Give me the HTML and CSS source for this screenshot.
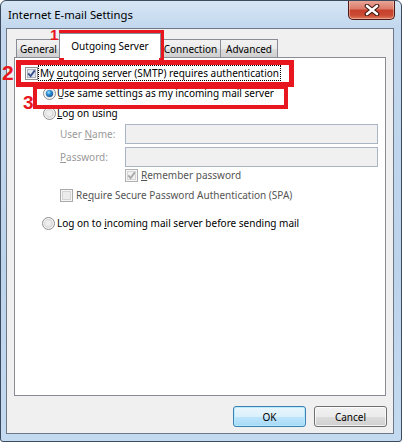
FILE: index.html
```html
<!DOCTYPE html>
<html>
<head>
<meta charset="utf-8">
<link rel="stylesheet" href="styles.css">
</head>
<body>
<div class="window">
  <div class="titlebar">
    <span class="title">Internet E-mail Settings</span>
    <div class="close">
      <svg width="16" height="12" viewBox="0 0 16 12">
        <path d="M3 2 L13 10 M13 2 L3 10" stroke="#3a1410" stroke-width="4.6" stroke-linecap="round"/>
        <path d="M3 2 L13 10 M13 2 L3 10" stroke="#ffffff" stroke-width="2.6" stroke-linecap="round"/>
      </svg>
    </div>
  </div>
  <div class="client">
    <div class="tabs">
      <div class="tab t-general">General</div>
      <div class="tab selected t-outgoing">Outgoing Server</div>
      <div class="tab t-connection">Connection</div>
      <div class="tab t-advanced">Advanced</div>
    </div>
    <div class="panel">
      <div class="row row-auth">
        <svg class="box" width="13" height="13" viewBox="0 0 13 13">
          <rect x="0.5" y="0.5" width="12" height="12" fill="#f6f6f6" stroke="#8e8f8f"/>
          <rect x="2.5" y="2.5" width="8" height="8" fill="#dfe6ee" stroke="#aeb4bd"/>
          <path d="M3.2 6.4 L5.6 9 L9.8 3.4" fill="none" stroke="#3a4f8e" stroke-width="1.8"/>
        </svg>
        <span class="label focus">My <u>o</u>utgoing server (SMTP) requires authentication</span>
      </div>
      <div class="row row-radio1">
        <svg class="box" width="13" height="13" viewBox="0 0 13 13">
          <defs>
            <radialGradient id="dot" cx="0.4" cy="0.35" r="0.7">
              <stop offset="0" stop-color="#9be3ff"/>
              <stop offset="0.45" stop-color="#2a8fd6"/>
              <stop offset="1" stop-color="#174f8c"/>
            </radialGradient>
          </defs>
          <circle cx="6.5" cy="6.5" r="6" fill="#f4f4f4" stroke="#8f8f8f"/>
          <circle cx="6.5" cy="6.5" r="4.2" fill="#dadada"/>
          <circle cx="6.5" cy="6.5" r="3.6" fill="url(#dot)"/>
        </svg>
        <span class="label">U̲se same settings as my incoming mail server</span>
      </div>
      <div class="row row-radio2">
        <svg class="box" width="13" height="13" viewBox="0 0 13 13">
          <circle cx="6.5" cy="6.5" r="6" fill="#f4f4f4" stroke="#8f8f8f"/>
          <circle cx="6.5" cy="6.5" r="4.4" fill="#d9d9d9"/>
          <circle cx="6.2" cy="6.2" r="3" fill="#eeeeee"/>
        </svg>
        <span class="label"><u>L</u>og on using</span>
      </div>
      <div class="row row-field row-user">
        <span class="flabel">User <u>N</u>ame:</span>
        <span class="input"></span>
      </div>
      <div class="row row-field row-pass">
        <span class="flabel"><u>P</u>assword:</span>
        <span class="input"></span>
      </div>
      <div class="row row-remember">
        <svg class="box" width="13" height="13" viewBox="0 0 13 13">
          <rect x="0.5" y="0.5" width="12" height="12" fill="#f6f6f6" stroke="#b1b1b1"/>
          <rect x="2.5" y="2.5" width="8" height="8" fill="#f1f1f1" stroke="#d6d6d6"/>
          <path d="M3.2 6.4 L5.6 9 L9.8 3.4" fill="none" stroke="#a8a8a8" stroke-width="1.8"/>
        </svg>
        <span class="label dim"><u>R</u>emember password</span>
      </div>
      <div class="row row-spa">
        <svg class="box" width="13" height="13" viewBox="0 0 13 13">
          <rect x="0.5" y="0.5" width="12" height="12" fill="#f6f6f6" stroke="#a9a9a9"/>
          <rect x="2.5" y="2.5" width="8" height="8" fill="#ececec" stroke="#d4d4d4"/>
        </svg>
        <span class="label dim">Re<u>q</u>uire Secure Password Authentication (SPA)</span>
      </div>
      <div class="row row-radio3">
        <svg class="box" width="13" height="13" viewBox="0 0 13 13">
          <circle cx="6.5" cy="6.5" r="6" fill="#f4f4f4" stroke="#8f8f8f"/>
          <circle cx="6.5" cy="6.5" r="4.4" fill="#d9d9d9"/>
          <circle cx="6.2" cy="6.2" r="3" fill="#eeeeee"/>
        </svg>
        <span class="label">Log on to <u>i</u>ncoming mail server before sending mail</span>
      </div>
    </div>
    <div class="buttons">
      <button class="btn default">OK</button>
      <button class="btn">Cancel</button>
    </div>
  </div>
  <div class="mark box1"></div>
  <div class="mark box2"></div>
  <div class="mark box3"></div>
  <span class="num n1">1</span>
  <span class="num n2">2</span>
  <span class="num n3">3</span>
</div>
</body>
</html>
```
FILE: styles.css
```css
html, body {
  margin: 0;
  padding: 0;
  background: #ffffff;
}

.window {
  position: relative;
  width: 402px;
  height: 442px;
  box-sizing: border-box;
  border: 1px solid #3b4a5c;
  border-radius: 6px 6px 3px 3px;
  background: linear-gradient(180deg, #d6e5f5 0px, #c3d8ee 26px, #bcd3ec 60%, #c4daf0 100%);
  display: flex;
  flex-direction: column;
  font-family: "Noto Sans", "Open Sans", sans-serif;
  font-size: 10px;
  color: #000;
  overflow: hidden;
}

.titlebar {
  height: 27px;
  flex: none;
  display: flex;
  align-items: flex-start;
}

.title {
  margin: 7px 0 0 7px;
  line-height: 14px;
  font-size: 11.3px;
  color: #000;
}

.close {
  margin-left: auto;
  margin-right: 6px;
  margin-top: -1px;
  width: 47px;
  height: 20px;
  box-sizing: border-box;
  border: 1px solid #4b1a14;
  border-top: none;
  border-radius: 0 0 5px 5px;
  background: linear-gradient(180deg, #e9aa9c 0%, #dc7c6a 45%, #c8412c 55%, #c94a33 80%, #e07a5c 100%);
  box-shadow: inset 0 0 0 1px rgba(255, 220, 210, 0.45);
  display: flex;
  align-items: center;
  justify-content: center;
}

.client {
  flex: 1;
  margin: 0 7px 7px 5px;
  border: 1px solid #6c7887;
  background: #f0f0f0;
  display: flex;
  flex-direction: column;
}

.tabs {
  height: 28px;
  flex: none;
  display: flex;
  align-items: flex-end;
  padding-left: 9px;
}

.tab {
  box-sizing: border-box;
  height: 18px;
  padding-top: 2px;
  line-height: 14px;
  text-align: center;
  border: 1px solid #898c95;
  border-bottom: none;
  background: linear-gradient(180deg, #f2f2f2 0%, #ebebeb 50%, #dddddd 50%, #cfcfcf 100%);
  white-space: nowrap;
}

.t-general { width: 45px; }
.t-outgoing { width: 102px; }
.t-connection { width: 61px; }
.t-advanced { width: 58px; margin-left: -1px; }

.tab.selected {
  position: relative;
  z-index: 1;
  height: 25px;
  padding-top: 5px;
  margin: 0 -1px -1px -2px;
  background: #ffffff;
}

.panel {
  flex: none;
  height: 339px;
  box-sizing: border-box;
  margin: 0 7px;
  border: 1px solid #898c95;
  background: #ffffff;
  display: flex;
  flex-direction: column;
}

.row {
  display: flex;
  align-items: center;
  height: 16px;
  flex: none;
  white-space: nowrap;
}

.box { flex: none; display: block; }

.label { line-height: 14px; }

.row-auth { margin-top: 7px; padding-left: 10px; }
.row-auth .label { margin-left: 0; padding: 0 1px; border: 1px dotted #000; }

.row-radio1 { margin-top: 4px; padding-left: 28px; }
.row-radio2 { margin-top: 4px; padding-left: 28px; }
.row-radio1 .label, .row-radio2 .label { margin-left: 1px; }

.row-field { height: 20px; padding-left: 45px; margin-top: 3px; }
.flabel { width: 65px; color: #9a9a9a; line-height: 14px; }
.input {
  width: 253px;
  height: 20px;
  box-sizing: border-box;
  border: 1px solid #a9b5c5;
  background: #f0f0f0;
}

.row-remember { margin-top: 0; padding-left: 110px; }
.row-spa { margin-top: 4px; padding-left: 45px; }
.row-remember .label, .row-spa .label { margin-left: 3px; }
.dim { color: #555555; }

.row-radio3 { margin-top: 12px; padding-left: 27px; }
.row-radio3 .label { margin-left: 2px; }

.buttons {
  display: flex;
  justify-content: flex-end;
  gap: 8px;
  margin: 10px 6px 0 0;
}

.btn {
  width: 73px;
  height: 21px;
  padding: 0;
  box-sizing: border-box;
  border: 1px solid #707070;
  border-radius: 3px;
  background: linear-gradient(180deg, #f2f2f2 0%, #ebebeb 50%, #dddddd 50%, #cfcfcf 100%);
  box-shadow: inset 0 0 0 1px rgba(255, 255, 255, 0.75);
  font: inherit;
  color: #000;
}

.btn.default {
  border-color: #3c7fb1;
  background: linear-gradient(180deg, #eaf6fd 0%, #d9f0fc 50%, #bee6fd 50%, #a7d9f5 100%);
  box-shadow: inset 0 0 0 1px rgba(180, 235, 255, 0.9);
}

.mark {
  position: absolute;
  box-sizing: border-box;
  border: 5px solid #e8161e;
}

.box1 { left: 58px; top: 29px; width: 105px; height: 35px; }
.box2 { left: 15px; top: 59px; width: 278px; height: 27px; }
.box3 { left: 32px; top: 84px; width: 255px; height: 24px; border-width: 4px; }

.num {
  position: absolute;
  font-family: "Liberation Sans", Arial, sans-serif;
  font-weight: bold;
  color: #e8161e;
  line-height: 1;
}

.n1 { left: 49px; top: 26px; font-size: 15px; }
.n2 { left: 1px; top: 61px; font-size: 21px; }
.n3 { left: 22px; top: 92px; font-size: 19px; }
```
